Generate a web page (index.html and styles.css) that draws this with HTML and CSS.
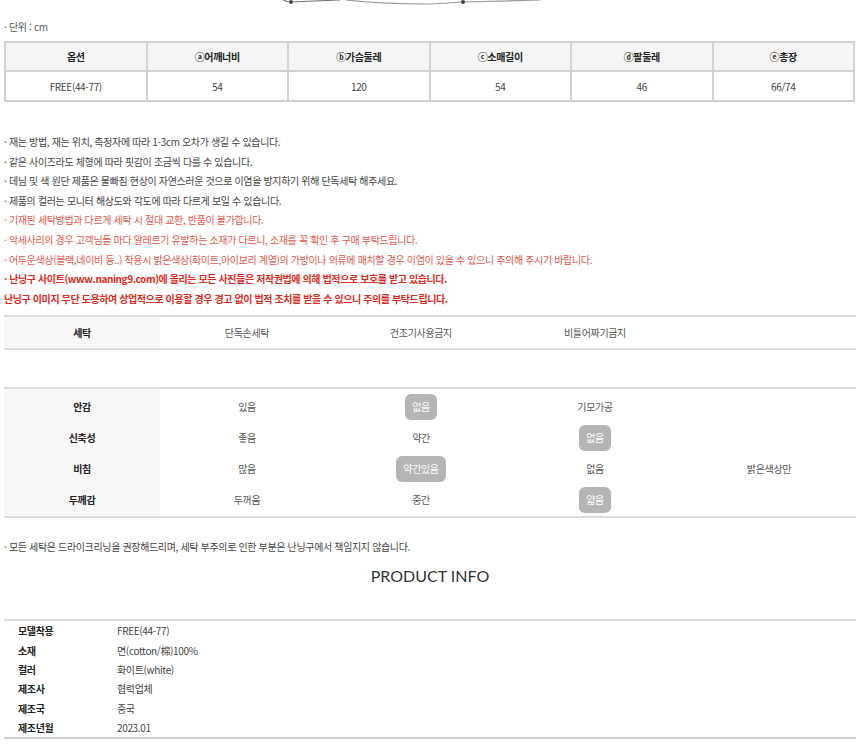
FILE: index.html
```html
<html lang="ko">
<head>
    <meta charset="UTF-8">
    <title>상품 상세</title>
    <link rel="stylesheet" href="styles.css">
</head>
<body>
<div id="detail">
    <svg class="deco" width="860" height="12" viewBox="0 0 860 12">
        <path d="M283 0 Q287 2 291 2 L340 0" fill="none" stroke="#777" stroke-width="1.2"/>
        <path d="M346 0 Q380 4 430 4 L463 2 L540 0 L544 -2" fill="none" stroke="#999" stroke-width="1.2"/>
        <circle cx="291" cy="2" r="2" fill="#444"/>
        <circle cx="463" cy="2" r="2" fill="#444"/>
    </svg>

    <p class="unit">· 단위 : cm</p>

    <table class="size">
        <tr>
            <th>옵션</th>
            <th>ⓐ어깨너비</th>
            <th>ⓑ가슴둘레</th>
            <th>ⓒ소매길이</th>
            <th>ⓓ팔둘레</th>
            <th>ⓔ총장</th>
        </tr>
        <tr>
            <td>FREE(44-77)</td>
            <td>54</td>
            <td>120</td>
            <td>54</td>
            <td>46</td>
            <td>66/74</td>
        </tr>
    </table>

    <div class="notes">
        <p>· 재는 방법, 재는 위치, 측정자에 따라 1-3cm 오차가 생길 수 있습니다.</p>
        <p>· 같은 사이즈라도 체형에 따라 핏감이 조금씩 다를 수 있습니다.</p>
        <p>· 데님 및 색 원단 제품은 물빠짐 현상이 자연스러운 것으로 이염을 방지하기 위해 단독세탁 해주세요.</p>
        <p>· 제품의 컬러는 모니터 해상도와 각도에 따라 다르게 보일 수 있습니다.</p>
        <p class="red">· 기재된 세탁방법과 다르게 세탁 시 절대 교환, 반품이 불가합니다.</p>
        <p class="red">· 악세사리의 경우 고객님들 마다 알레르기 유발하는 소재가 다르니, 소재를 꼭 확인 후 구매 부탁드립니다.</p>
        <p class="red">· 어두운색상(블랙,네이비 등..) 착용시 밝은색상(화이트,아이보리 계열)의 가방이나 의류에 매치할 경우 이염이 있을 수 있으니 주의해 주시기 바랍니다.</p>
        <p class="warn">· 난닝구 사이트(www.naning9.com)에 올리는 모든 사진들은 저작권법에 의해 법적으로 보호를 받고 있습니다.</p>
        <p class="warn">난닝구 이미지 무단 도용하여 상업적으로 이용할 경우 경고 없이 법적 조치를 받을 수 있으니 주의를 부탁드립니다.</p>
    </div>

    <div class="spec wash">
        <div class="label">세탁</div>
        <div>단독손세탁</div>
        <div>건조기사용금지</div>
        <div>비틀어짜기금지</div>
        <div></div>
    </div>

    <div class="spec feel">
        <div class="label">안감</div>
        <div>있음</div>
        <div><span class="pick">없음</span></div>
        <div>기모가공</div>
        <div></div>

        <div class="label">신축성</div>
        <div>좋음</div>
        <div>약간</div>
        <div><span class="pick">없음</span></div>
        <div></div>

        <div class="label">비침</div>
        <div>많음</div>
        <div><span class="pick">약간있음</span></div>
        <div>없음</div>
        <div>밝은색상만</div>

        <div class="label">두께감</div>
        <div>두꺼움</div>
        <div>중간</div>
        <div><span class="pick">얇음</span></div>
        <div></div>
    </div>

    <p class="dry">· 모든 세탁은 드라이크리닝을 권장해드리며, 세탁 부주의로 인한 부분은 난닝구에서 책임지지 않습니다.</p>

    <h2 class="title">PRODUCT INFO</h2>

    <div class="info">
        <div class="key">모델착용</div><div>FREE(44-77)</div>
        <div class="key">소재</div><div>면(cotton/棉)100%</div>
        <div class="key">컬러</div><div>화이트(white)</div>
        <div class="key">제조사</div><div>협력업체</div>
        <div class="key">제조국</div><div>중국</div>
        <div class="key">제조년월</div><div>2023.01</div>
    </div>
</div>
</body>
</html>
```

FILE: styles.css
```css
body {
    margin: 0;
    background: #fff;
    font-family: "Noto Sans CJK KR", "Noto Sans", sans-serif;
    font-size: 10px;
    letter-spacing: -0.35px;
    color: #444;
}

#detail {
    width: 852px;
    margin-left: 4px;
}

.deco {
    display: block;
    margin-left: -4px;
}

p {
    margin: 0;
}

.unit {
    margin-top: 6px;
    line-height: 18px;
    color: #555;
}

/* size chart */
.size {
    margin-top: 5px;
    width: 851px;
    border-collapse: collapse;
    table-layout: fixed;
    font: inherit;
    letter-spacing: inherit;
}
.size th,
.size td {
    border: 2px solid #d2d2d2;
    text-align: center;
    padding: 0;
}
.size th {
    height: 29px;
    background: #f5f5f5;
    color: #222;
    font-weight: bold;
}
.size td {
    height: 30px;
    color: #444;
}

/* notes */
.notes {
    margin-top: 30px;
}
.notes p {
    line-height: 19.6px;
    white-space: nowrap;
}
.notes .red {
    color: #e2574c;
}
.notes .warn {
    color: #dd2b22;
    font-weight: bold;
    letter-spacing: -0.4px;
}

/* washing / feel */
.spec {
    display: grid;
    grid-template-columns: 156px repeat(4, 174px);
    border-top: 2px solid #dcdcdc;
    border-bottom: 2px solid #dcdcdc;
    background: linear-gradient(to right, #f7f7f7 156px, #fff 156px);
    color: #555;
}
.spec > div {
    height: 31px;
    display: flex;
    align-items: center;
    justify-content: center;
}
.spec .label {
    color: #222;
    font-weight: bold;
}
.wash {
    margin-top: 7px;
}
.feel {
    margin-top: 37px;
    padding: 2px 0 1px;
}
.pick {
    display: inline-block;
    height: 26px;
    line-height: 26px;
    padding: 0 7px;
    border-radius: 6px;
    background: #b5b5b5;
    color: #fff;
}

.dry {
    margin-top: 19px;
    line-height: 20px;
    color: #444;
}

.title {
    margin: 9px 0 0;
    text-align: center;
    font-family: Lato, "Noto Sans", sans-serif;
    font-weight: normal;
    font-size: 16px;
    letter-spacing: 0;
    line-height: 20px;
    color: #333;
}

/* product info */
.info {
    margin-top: 33px;
    display: grid;
    grid-template-columns: 99px 1fr;
    grid-auto-rows: 19.3px;
    align-items: center;
    border-top: 2px solid #dcdcdc;
    border-bottom: 2px solid #d0d0d0;
    padding-left: 14px;
    color: #444;
}
.info .key {
    color: #222;
    font-weight: bold;
}
```
